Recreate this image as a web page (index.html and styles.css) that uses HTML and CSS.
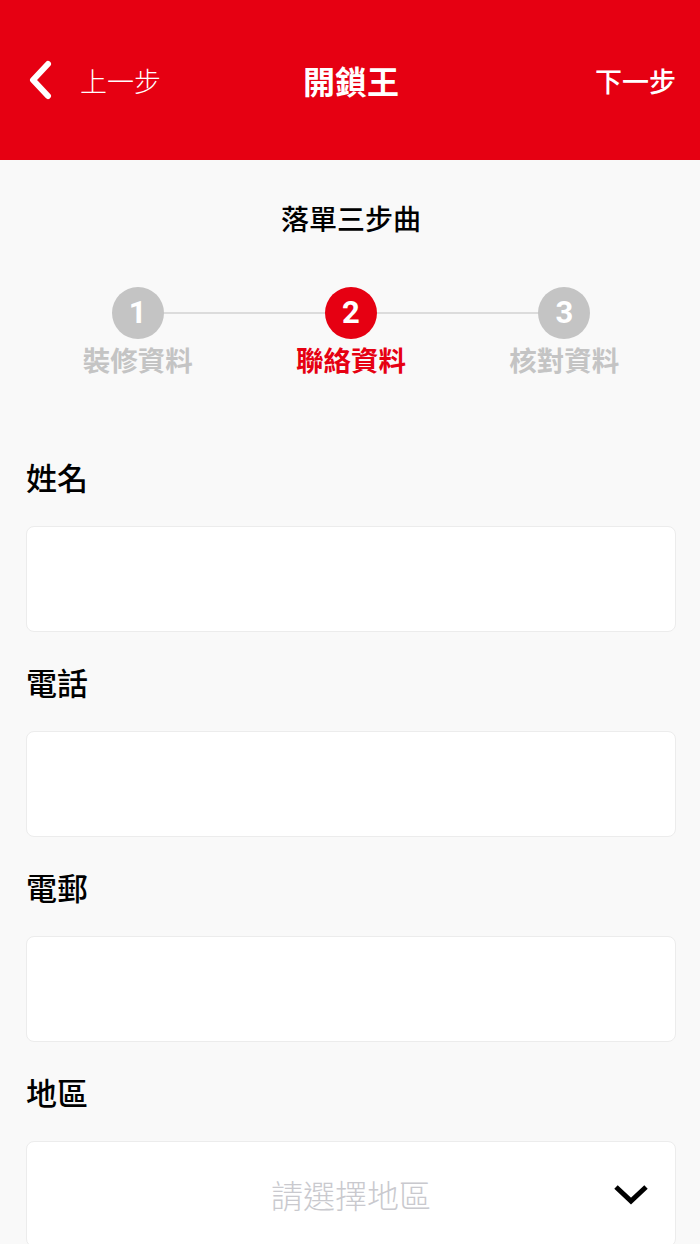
FILE: index.html
```html
<!DOCTYPE html>
<html lang="zh-Hant">
<head>
  <meta charset="UTF-8"/>
  <title>開鎖王</title>
  <link rel="stylesheet" href="styles.css">
</head>
<body>
<header class="topbar">
  <a class="nav-back" href="#">
    <svg class="back-icon" width="28" height="40" viewBox="0 0 28 40">
      <path d="M22 4 L7 20 L22 36" fill="none" stroke="#fff" stroke-width="6" stroke-linecap="round" stroke-linejoin="round"/>
    </svg>
    <span>上一步</span>
  </a>
  <h1 class="topbar-title">開鎖王</h1>
  <a class="nav-next" href="#">下一步</a>
</header>

<main class="content">
  <h2 class="steps-title">落單三步曲</h2>

  <div class="steps">
    <div class="step">
      <div class="step-num">1</div>
      <div class="step-label">裝修資料</div>
    </div>
    <div class="step active">
      <div class="step-num">2</div>
      <div class="step-label">聯絡資料</div>
    </div>
    <div class="step">
      <div class="step-num">3</div>
      <div class="step-label">核對資料</div>
    </div>
  </div>

  <form class="form">
    <label class="field">
      <span class="field-label">姓名</span>
      <input class="field-input" type="text">
    </label>
    <label class="field">
      <span class="field-label">電話</span>
      <input class="field-input" type="tel">
    </label>
    <label class="field">
      <span class="field-label">電郵</span>
      <input class="field-input" type="email">
    </label>
    <div class="field">
      <span class="field-label">地區</span>
      <div class="field-input select">
        <span class="placeholder">請選擇地區</span>
        <svg class="chevron" width="36" height="24" viewBox="0 0 36 24">
          <path d="M3 5 L18 19 L33 5" fill="none" stroke="#000" stroke-width="5"/>
        </svg>
      </div>
    </div>
  </form>
</main>
</body>
</html>
```

FILE: styles.css
```css
html,
body {
    margin: 0;
    padding: 0;
}

body {
    font-family: "Noto Sans CJK TC", "Noto Sans", sans-serif;
    background-color: #f9f9f9;
    color: #000;
    height: 1244px;
    overflow: hidden;
}

.topbar {
    background-color: #e60012;
    height: 160px;
    display: flex;
    align-items: center;
    justify-content: space-between;
    padding: 0 24px 0 26px;
    box-sizing: border-box;
}

.topbar a {
    color: #fff;
    text-decoration: none;
}

.nav-back {
    display: flex;
    align-items: center;
    gap: 26px;
    font-size: 27px;
    font-weight: 300;
    width: 200px;
}

.back-icon {
    display: block;
}

.topbar-title {
    margin: 0;
    color: #fff;
    font-size: 32px;
    font-weight: 700;
    line-height: 40px;
}

.nav-next {
    font-size: 27px;
    font-weight: 500;
    width: 200px;
    text-align: right;
}

.content {
    padding: 0 24px 0 26px;
}

.steps-title {
    margin: 0;
    padding-top: 38px;
    text-align: center;
    font-size: 28px;
    font-weight: 500;
    line-height: 40px;
}

.steps {
    display: grid;
    grid-template-columns: repeat(3, 1fr);
    margin: 49px 0 0;
    padding: 0 5px;
}

.step {
    display: flex;
    flex-direction: column;
    align-items: center;
    position: relative;
}

.step + .step::before {
    content: "";
    position: absolute;
    top: 25px;
    right: 50%;
    width: 100%;
    height: 2px;
    background-color: #dcdcdc;
    z-index: 0;
}

.step-num {
    width: 52px;
    height: 52px;
    border-radius: 50%;
    background-color: #c4c4c4;
    color: #fff;
    font-family: Roboto, "Noto Sans", sans-serif;
    font-size: 31px;
    font-weight: 700;
    line-height: 52px;
    text-align: center;
    position: relative;
    z-index: 1;
}

.step-label {
    color: #c4c4c4;
    font-size: 27.5px;
    font-weight: 700;
    line-height: 40px;
}

.step.active .step-num {
    background-color: #e60012;
}

.step.active .step-label {
    color: #e60012;
}

.form {
    margin-top: 78px;
}

.field {
    display: block;
    margin-bottom: 30px;
}

.field-label {
    display: block;
    font-size: 31px;
    font-weight: 500;
    line-height: 40px;
    margin-bottom: 29px;
}

.field-input {
    display: block;
    width: 100%;
    height: 106px;
    box-sizing: border-box;
    background-color: #fff;
    border: 1.5px solid #ececec;
    border-radius: 8px;
    outline: none;
    font-family: inherit;
    font-size: 30px;
    padding: 0 20px;
}

.select {
    display: flex;
    align-items: center;
    justify-content: center;
    position: relative;
}

.placeholder {
    color: #c9c9ce;
    font-size: 32px;
    font-weight: 300;
}

.chevron {
    position: absolute;
    right: 26px;
    top: 40px;
}
```
